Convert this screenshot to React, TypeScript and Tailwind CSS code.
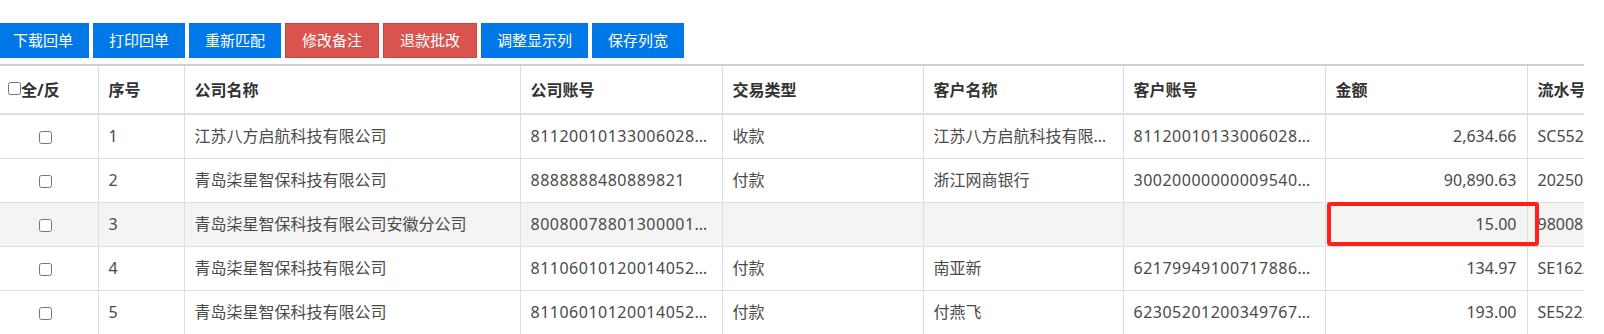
import React from 'react';

type Row = {
  no: number;
  company: string;
  companyAcct: string;
  type: string;
  customer: string;
  customerAcct: string;
  amount: string;
  serial: string;
};

const rows: Row[] = [
  {
    no: 1,
    company: '江苏八方启航科技有限公司',
    companyAcct: '81120010133006028123',
    type: '收款',
    customer: '江苏八方启航科技有限公司',
    customerAcct: '81120010133006028123',
    amount: '2,634.66',
    serial: 'SC5520250611000123',
  },
  {
    no: 2,
    company: '青岛柒星智保科技有限公司',
    companyAcct: '8888888480889821',
    type: '付款',
    customer: '浙江网商银行',
    customerAcct: '30020000000009540012',
    amount: '90,890.63',
    serial: '2025061100012345',
  },
  {
    no: 3,
    company: '青岛柒星智保科技有限公司安徽分公司',
    companyAcct: '80080078801300001234',
    type: '',
    customer: '',
    customerAcct: '',
    amount: '15.00',
    serial: '9800820250611001',
  },
  {
    no: 4,
    company: '青岛柒星智保科技有限公司',
    companyAcct: '81106010120014052321',
    type: '付款',
    customer: '南亚新',
    customerAcct: '62179949100717886543',
    amount: '134.97',
    serial: 'SE1622025061100012',
  },
  {
    no: 5,
    company: '青岛柒星智保科技有限公司',
    companyAcct: '81106010120014052321',
    type: '付款',
    customer: '付燕飞',
    customerAcct: '62305201200349767890',
    amount: '193.00',
    serial: 'SE5222025061100034',
  },
];

const buttons = [
  { label: '下载回单', danger: false },
  { label: '打印回单', danger: false },
  { label: '重新匹配', danger: false },
  { label: '修改备注', danger: true },
  { label: '退款批改', danger: true },
  { label: '调整显示列', danger: false },
  { label: '保存列宽', danger: false },
];

const headers = ['序号', '公司名称', '公司账号', '交易类型', '客户名称', '客户账号', '金额', '流水号'];
const colWidths = [98, 86, 336, 202, 201, 200, 202, 202, 220];

const cell =
  'h-[44px] px-[10px] border border-[#dedede] whitespace-nowrap overflow-hidden text-ellipsis';
const th =
  'h-[49px] px-[10px] text-left font-bold text-[#333] border-x border-[#dedede] border-t-2 border-t-[#d0d0d0] border-b-2 border-b-[#dedede] whitespace-nowrap overflow-hidden';

export default function App() {
  return (
    <div
      className="w-[1604px] h-[334px] bg-white overflow-hidden text-[16px] text-[#4a4a4a]"
      style={{ fontFamily: '"Noto Sans", "Noto Sans CJK SC", sans-serif' }}
    >
      <div className="pt-[23px] flex gap-[4px] -ml-[3px]">
        {buttons.map((b) => (
          <button
            key={b.label}
            className={
              b.danger
                ? 'h-[35px] px-4 text-[15px] text-white bg-[#d9534f] border border-[#d0433e]'
                : 'h-[35px] px-4 text-[15px] text-white bg-[#0078e7]'
            }
          >
            {b.label}
          </button>
        ))}
      </div>

      <div className="relative mt-[6px] w-[1584px] overflow-hidden">
        <table className="table-fixed border-collapse w-[1747px]">
          <colgroup>
            {colWidths.map((w, i) => (
              <col key={i} style={{ width: w }} />
            ))}
          </colgroup>
          <thead>
            <tr>
              <th className={th + ' pl-[8px] pr-[4px] border-l-0'}>
                <span className="flex items-center">
                  <input type="checkbox" className="w-[13px] h-[13px] mb-[3px]" />
                  全/反
                </span>
              </th>
              {headers.map((h) => (
                <th key={h} className={th}>
                  {h}
                </th>
              ))}
            </tr>
          </thead>
          <tbody>
            {rows.map((r) => (
              <tr key={r.no} className={r.no === 3 ? 'bg-[#f4f4f4]' : 'bg-white'}>
                <td className="h-[44px] pl-[10px] pr-[16px] text-center border border-l-0 border-[#dedede]">
                  <input type="checkbox" className="w-[13px] h-[13px] align-middle" />
                </td>
                <td className={cell}>{r.no}</td>
                <td className={cell}>{r.company}</td>
                <td className={cell + ' tracking-[0.5px]'}>{r.companyAcct}</td>
                <td className={cell}>{r.type}</td>
                <td className={cell}>{r.customer}</td>
                <td className={cell + ' tracking-[0.5px]'}>{r.customerAcct}</td>
                <td className={cell + ' text-right'}>{r.amount}</td>
                <td className={cell}>{r.serial}</td>
              </tr>
            ))}
          </tbody>
        </table>

        {/* annotation box over the 15.00 amount */}
        <div className="absolute left-[1327px] top-[138px] w-[212px] h-[44px] border-[4px] border-[#ff2119] rounded-[3px] pointer-events-none" />
      </div>
    </div>
  );
}
